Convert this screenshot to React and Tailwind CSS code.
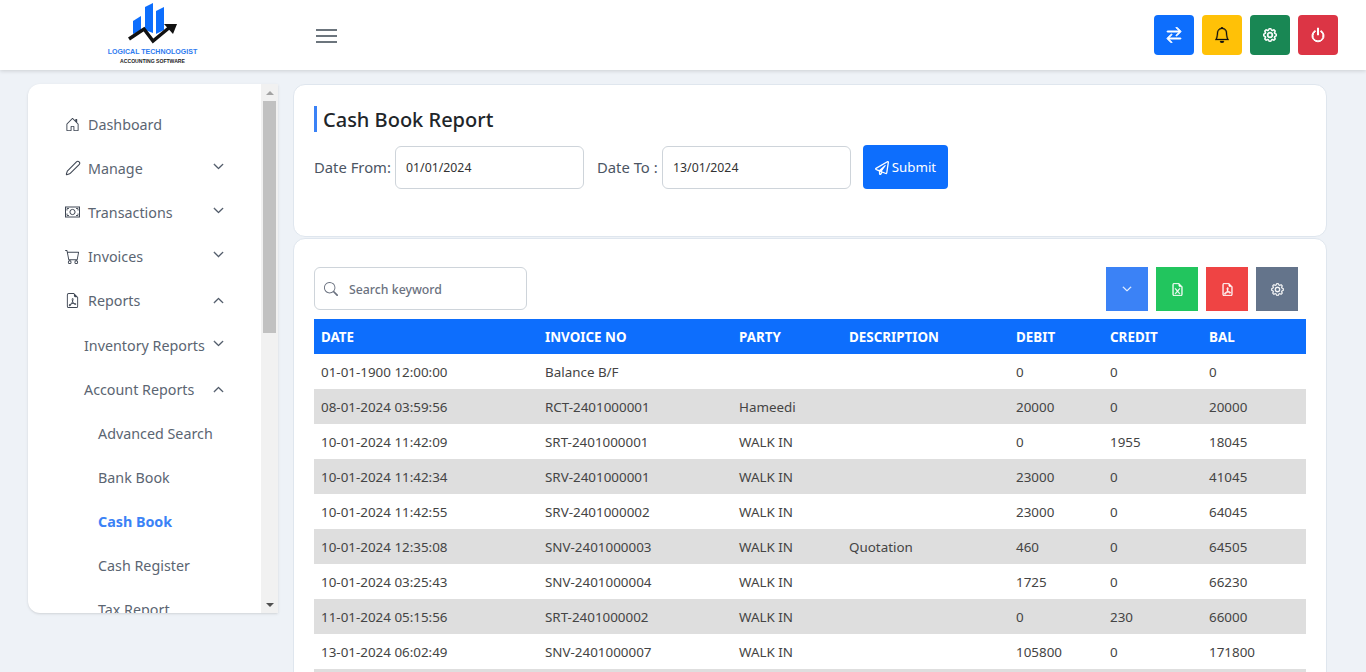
import React from "react";
import {
  BsHouseDoor,
  BsCart,
  BsFileEarmarkPdf,
  BsFileEarmarkExcel,
  BsChevronDown,
  BsChevronUp,
  BsArrowLeftRight,
  BsBell,
  BsGear,
  BsPower,
  BsSearch,
} from "react-icons/bs";
import { FaRegPaperPlane } from "react-icons/fa";
import { Pen } from "lucide-react";

const rows = [
  ["01-01-1900 12:00:00", "Balance B/F", "", "", "0", "0", "0"],
  ["08-01-2024 03:59:56", "RCT-2401000001", "Hameedi", "", "20000", "0", "20000"],
  ["10-01-2024 11:42:09", "SRT-2401000001", "WALK IN", "", "0", "1955", "18045"],
  ["10-01-2024 11:42:34", "SRV-2401000001", "WALK IN", "", "23000", "0", "41045"],
  ["10-01-2024 11:42:55", "SRV-2401000002", "WALK IN", "", "23000", "0", "64045"],
  ["10-01-2024 12:35:08", "SNV-2401000003", "WALK IN", "Quotation", "460", "0", "64505"],
  ["10-01-2024 03:25:43", "SNV-2401000004", "WALK IN", "", "1725", "0", "66230"],
  ["11-01-2024 05:15:56", "SRT-2401000002", "WALK IN", "", "0", "230", "66000"],
  ["13-01-2024 06:02:49", "SNV-2401000007", "WALK IN", "", "105800", "0", "171800"],
  ["", "", "", "", "", "", ""],
];

const columns = [
  ["DATE", "w-[224px]"],
  ["INVOICE NO", "w-[194px]"],
  ["PARTY", "w-[110px]"],
  ["DESCRIPTION", "w-[167px]"],
  ["DEBIT", "w-[94px]"],
  ["CREDIT", "w-[99px]"],
  ["BAL", "w-[104px]"],
];

const Logo = () => (
  <div className="w-[89px] self-start pt-[3px] flex flex-col items-center">
    <svg width="52" height="42" viewBox="0 0 52 42">
      <polygon points="6,18 14,13 14,28 6,31" fill="#0d6efd" />
      <polygon points="18,4 26,0 26,30 18,27" fill="#0d6efd" />
      <polygon points="29,8 37,4 37,27 29,31" fill="#0d6efd" />
      <path d="M2 36 L17 26 L26 38 L43 24" fill="none" stroke="#111" strokeWidth="3.5" />
      <polygon points="37,21 50,21 46,31" fill="#111" />
    </svg>
    <div className="mt-[2px] text-[7.05px] leading-[9px] font-bold text-[#2f7bf0] whitespace-nowrap font-['Liberation_Sans',sans-serif]">
      LOGICAL TECHNOLOGIST
    </div>
    <div className="mt-[2px] text-[5.1px] leading-[7px] font-bold text-[#222] whitespace-nowrap font-['Liberation_Sans',sans-serif]">
      ACCOUNTING SOFTWARE
    </div>
  </div>
);

// banknote with round centre and corner marks
const CashIcon = () => (
  <svg width="15" height="12" viewBox="0 0 15 12" fill="none" stroke="currentColor">
    <rect x="0.5" y="1" width="14" height="10" />
    <circle cx="7.5" cy="6" r="2.6" />
    <path d="M2 4.5V2.5H4M13 4.5V2.5H11M2 7.5V9.5H4M13 7.5V9.5H11" strokeWidth="0.9" />
  </svg>
);

const TopButton = ({ color, children }) => (
  <button className={`w-10 h-10 rounded flex items-center justify-center ${color}`}>{children}</button>
);

const NavItem = ({ icon, label, chevron, indent = "pl-[37px]", active }) => (
  <div className={`h-11 flex items-center pr-[37px] text-[14.3px] ${indent} ${active ? "font-bold text-[#3b82f6]" : "text-[#5b6572]"}`}>
    {icon && <span className="w-[23px] text-[#3f4754] text-[15px]">{icon}</span>}
    <span className="flex-1 whitespace-nowrap pt-px">{label}</span>
    {chevron === "down" && <BsChevronDown className="text-[11px] text-[#3f4a5a] stroke-1 -mt-1" />}
    {chevron === "up" && <BsChevronUp className="text-[11px] text-[#3f4a5a] stroke-1" />}
  </div>
);

const Sidebar = () => (
  <aside className="w-[250px] h-[529px] bg-white rounded-l-xl shadow-sm flex overflow-hidden">
    <nav className="flex-1 pt-[18px] overflow-hidden">
      <NavItem icon={<BsHouseDoor />} label="Dashboard" />
      <NavItem icon={<Pen size={16} strokeWidth={1.6} />} label="Manage" chevron="down" />
      <NavItem icon={<CashIcon />} label="Transactions" chevron="down" />
      <NavItem icon={<BsCart />} label="Invoices" chevron="down" />
      <NavItem icon={<BsFileEarmarkPdf />} label="Reports" chevron="up" />
      <div className="mt-px">
        <NavItem label="Inventory Reports" chevron="down" indent="pl-14" />
        <NavItem label="Account Reports" chevron="up" indent="pl-14" />
        <NavItem label="Advanced Search" indent="pl-[70px]" />
        <NavItem label="Bank Book" indent="pl-[70px]" />
        <NavItem label="Cash Book" indent="pl-[70px]" active />
        <NavItem label="Cash Register" indent="pl-[70px]" />
        <NavItem label="Tax Report" indent="pl-[70px]" />
      </div>
    </nav>
    <div className="w-[17px] bg-[#f1f1f1] flex flex-col items-center">
      <div className="h-[17px] flex items-center justify-center">
        <div className="w-0 h-0 border-x-4 border-x-transparent border-b-4 border-b-[#a3a3a3]" />
      </div>
      <div className="w-[13px] h-[232px] bg-[#c1c1c1]" />
      <div className="flex-1" />
      <div className="h-[17px] flex items-center justify-center">
        <div className="w-0 h-0 border-x-4 border-x-transparent border-t-4 border-t-[#505050]" />
      </div>
    </div>
  </aside>
);

const ExportButton = ({ color, children }) => (
  <button className={`w-[42px] h-11 flex items-center justify-center text-white text-[13px] ${color}`}>{children}</button>
);

export default function App() {
  return (
    <div className="h-screen overflow-hidden bg-[#eef2f7] font-['Noto_Sans',sans-serif] text-[#444]">
      <header className="h-[70px] bg-white shadow-[0_1px_4px_rgba(0,0,0,0.15)] flex items-center pl-[108px] pr-[28px] relative">
        <Logo />
        <div className="ml-[119px] mt-[2px] w-[21px] flex flex-col gap-[4px]">
          <span className="h-[2px] bg-[#6c757d]" />
          <span className="h-[2px] bg-[#6c757d]" />
          <span className="h-[2px] bg-[#6c757d]" />
        </div>
        <div className="ml-auto flex gap-2">
          <TopButton color="bg-[#0d6efd] text-white text-base"><BsArrowLeftRight className="stroke-1 -scale-x-100" /></TopButton>
          <TopButton color="bg-[#ffc107] text-[#111] text-base"><BsBell className="stroke-[0.3]" /></TopButton>
          <TopButton color="bg-[#198754] text-white text-sm"><BsGear className="stroke-1" /></TopButton>
          <TopButton color="bg-[#dc3545] text-white text-base"><BsPower className="stroke-1" /></TopButton>
        </div>
      </header>

      <div className="flex pl-7 pt-[14px] gap-[15px]">
        <Sidebar />
        <main className="w-[1034px] flex flex-col gap-[1px]">
          <section className="h-[153px] bg-white rounded-xl border border-[#dfe6ee] pl-5 pt-[21px]">
            <h1 className="border-l-[3px] border-[#3b82f6] pl-[6px] text-xl leading-[26px] text-[#212529] font-medium">
              <span className="block pt-px h-[26px]">Cash Book Report</span>
            </h1>
            <div className="flex items-center mt-[13px] text-[14.8px] text-[#4b5563]">
              <label className="w-[81px] whitespace-nowrap">Date From:</label>
              <div className="w-[189px] h-[43px] border border-[#ced4da] rounded-md flex items-center pl-[10px] pt-[2px] text-[12.3px] text-[#333]">01/01/2024</div>
              <label className="ml-[13px] w-[65px] whitespace-nowrap">Date To :</label>
              <div className="w-[189px] h-[43px] border border-[#ced4da] rounded-md flex items-center pl-[10px] pt-[2px] text-[12.3px] text-[#333]">13/01/2024</div>
              <button className="ml-3 w-[85px] h-11 bg-[#0d6efd] rounded text-white text-[13.3px] flex items-center justify-center gap-[3px] pt-px">
                <FaRegPaperPlane className="text-sm" />
                Submit
              </button>
            </div>
          </section>

          <section className="flex-1 bg-white rounded-t-xl border border-[#dfe6ee] pl-5 pr-5 pt-7 h-[500px]">
            <div className="flex justify-between items-start pr-2">
              <div className="w-[213px] h-[43px] border border-[#ced4da] rounded-md flex items-center pl-[9px] gap-[11px] text-[12.3px] font-medium text-[#6b7280]">
                <BsSearch className="text-sm text-[#6b7280]" />
                <span className="pt-[3px]">Search keyword</span>
              </div>
              <div className="flex gap-2">
                <ExportButton color="bg-[#3b82f6]"><BsChevronDown className="stroke-1 text-[10px]" /></ExportButton>
                <ExportButton color="bg-[#22c55e]"><BsFileEarmarkExcel className="stroke-[0.5]" /></ExportButton>
                <ExportButton color="bg-[#ef4444]"><BsFileEarmarkPdf className="stroke-[0.5]" /></ExportButton>
                <ExportButton color="bg-[#64748b]"><BsGear className="stroke-[0.5]" /></ExportButton>
              </div>
            </div>
            <table className="w-[992px] table-fixed mt-2 text-[13.4px]">
              <thead>
                <tr className="bg-[#0d6efd] text-white h-[35px] text-left">
                  {columns.map(([name, width]) => (
                    <th key={name} className={`${width} pl-[7px] pt-[2px] font-bold`}>{name}</th>
                  ))}
                </tr>
              </thead>
              <tbody>
                {rows.map((row, i) => (
                  <tr key={i} className={`h-[35px] ${i % 2 ? "bg-[#dedede]" : "bg-white"}`}>
                    {row.map((cell, j) => (
                      <td key={j} className="pl-[7px] pt-[2px]">{cell}</td>
                    ))}
                  </tr>
                ))}
              </tbody>
            </table>
          </section>
        </main>
      </div>
    </div>
  );
}
